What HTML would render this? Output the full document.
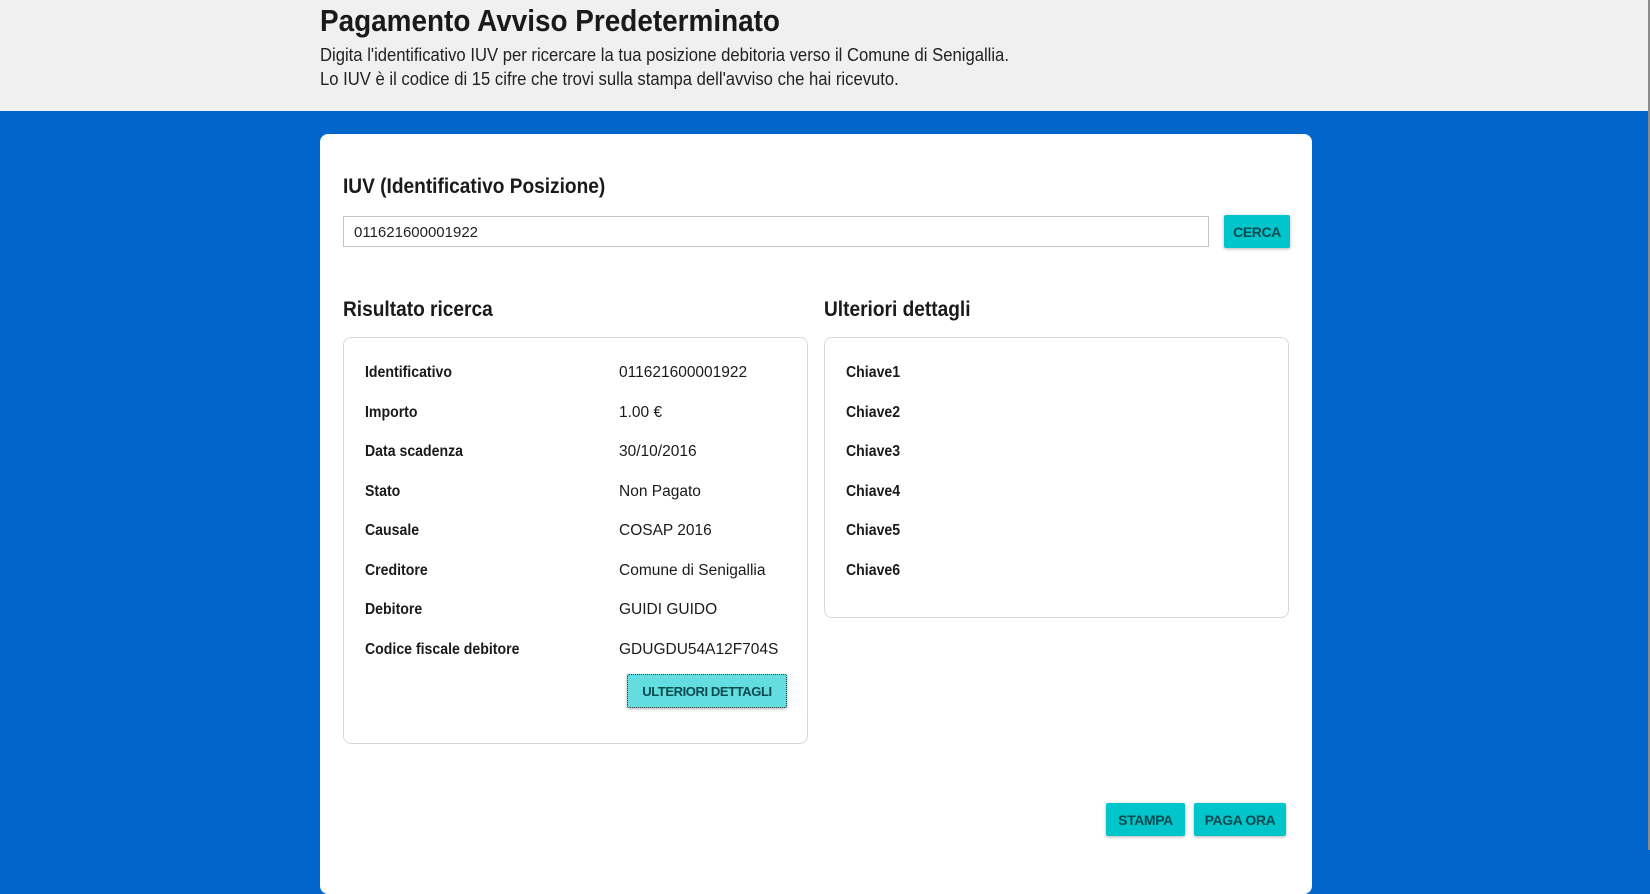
<!DOCTYPE html>
<html><head><meta charset="utf-8"><style>
*{box-sizing:border-box;margin:0;padding:0}
body{width:1650px;height:850px;overflow:hidden;background:#0066cc;font-family:"Liberation Sans",sans-serif;color:#1a1a1a;position:relative}
.hdr{position:absolute;left:0;top:0;width:1648px;height:111px;background:#f0f0f0}
.sb{position:absolute;right:0;top:0;width:2px;height:850px;background:#8a8a8a}
.c{display:inline-block;transform:scaleX(.91);transform-origin:0 0;white-space:nowrap}
h1{position:absolute;left:320px;top:3px;font-size:31px;font-weight:bold;color:#1a1a1a}
.d{position:absolute;left:320px;font-size:18px;color:#222}
.card{position:absolute;left:320px;top:134px;width:992px;height:760px;background:#fff;border-radius:8px}
.a{position:absolute}
.lbl{font-size:21px;font-weight:bold}
.inp{left:23px;top:82px;width:866px;height:31px;border:1px solid #c5c5c5;font-size:15px;padding:7px 10px;color:#222}
.btn{background:#00c5ca;color:#0b4a4f;font-weight:bold;font-size:14px;letter-spacing:-.4px;display:flex;align-items:center;justify-content:center;border-radius:2px;box-shadow:0 1px 3px rgba(0,0,0,.3)}
.box{border:1px solid #d9d9d9;border-radius:8px}
.r{position:absolute;font-size:15.5px}
.k{font-weight:bold}
</style></head><body>
<div class="hdr">
<h1><span class="c" style="transform:scaleX(.9)">Pagamento Avviso Predeterminato</span></h1>
<div class="d" style="top:45px"><span class="c" style="transform:scaleX(.925)">Digita l'identificativo IUV per ricercare la tua posizione debitoria verso il Comune di Senigallia.</span></div>
<div class="d" style="top:69px"><span class="c" style="transform:scaleX(.925)">Lo IUV è il codice di 15 cifre che trovi sulla stampa dell'avviso che hai ricevuto.</span></div>
</div>
<div class="sb"></div>
<div class="card">
<div class="a lbl" style="left:23px;top:41px"><span class="c">IUV (Identificativo Posizione)</span></div>
<div class="a inp">011621600001922</div>
<div class="a btn" style="left:904px;top:81px;width:66px;height:33px">CERCA</div>
<div class="a lbl" style="left:23px;top:164px"><span class="c">Risultato ricerca</span></div>
<div class="a lbl" style="left:504px;top:164px"><span class="c">Ulteriori dettagli</span></div>
<div class="a box" style="left:23px;top:203px;width:465px;height:407px">
<div class="r k" style="left:21px;top:26px"><span class="c">Identificativo</span></div><div class="r" style="left:275px;top:26px">011621600001922</div>
<div class="r k" style="left:21px;top:66px"><span class="c">Importo</span></div><div class="r" style="left:275px;top:66px">1.00 €</div>
<div class="r k" style="left:21px;top:105px"><span class="c">Data scadenza</span></div><div class="r" style="left:275px;top:105px">30/10/2016</div>
<div class="r k" style="left:21px;top:145px"><span class="c">Stato</span></div><div class="r" style="left:275px;top:145px">Non Pagato</div>
<div class="r k" style="left:21px;top:184px"><span class="c">Causale</span></div><div class="r" style="left:275px;top:184px">COSAP 2016</div>
<div class="r k" style="left:21px;top:224px"><span class="c">Creditore</span></div><div class="r" style="left:275px;top:224px">Comune di Senigallia</div>
<div class="r k" style="left:21px;top:263px"><span class="c">Debitore</span></div><div class="r" style="left:275px;top:263px">GUIDI GUIDO</div>
<div class="r k" style="left:21px;top:303px"><span class="c">Codice fiscale debitore</span></div><div class="r" style="left:275px;top:303px">GDUGDU54A12F704S</div>
<div class="a btn" style="left:283px;top:336px;width:160px;height:34px;background:#63dde0;border:1px dotted #333;font-size:13px">ULTERIORI DETTAGLI</div>
</div>
<div class="a box" style="left:504px;top:203px;width:465px;height:281px">
<div class="r k" style="left:21px;top:26px"><span class="c">Chiave1</span></div>
<div class="r k" style="left:21px;top:66px"><span class="c">Chiave2</span></div>
<div class="r k" style="left:21px;top:105px"><span class="c">Chiave3</span></div>
<div class="r k" style="left:21px;top:145px"><span class="c">Chiave4</span></div>
<div class="r k" style="left:21px;top:184px"><span class="c">Chiave5</span></div>
<div class="r k" style="left:21px;top:224px"><span class="c">Chiave6</span></div>
</div>
<div class="a btn" style="left:786px;top:669px;width:79px;height:33px">STAMPA</div>
<div class="a btn" style="left:874px;top:669px;width:92px;height:33px">PAGA ORA</div>
</div>
</body></html>
